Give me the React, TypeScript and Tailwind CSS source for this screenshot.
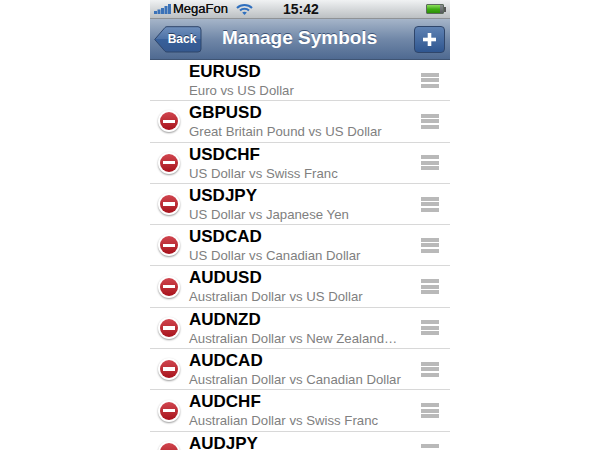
import React from 'react'

interface Symbol {
  code: string
  name?: string
  fixed?: boolean
}

const symbols: Symbol[] = [
  { code: 'EURUSD', name: 'Euro vs US Dollar', fixed: true },
  { code: 'GBPUSD', name: 'Great Britain Pound vs US Dollar' },
  { code: 'USDCHF', name: 'US Dollar vs Swiss Franc' },
  { code: 'USDJPY', name: 'US Dollar vs Japanese Yen' },
  { code: 'USDCAD', name: 'US Dollar vs Canadian Dollar' },
  { code: 'AUDUSD', name: 'Australian Dollar vs US Dollar' },
  { code: 'AUDNZD', name: 'Australian Dollar vs New Zealand…' },
  { code: 'AUDCAD', name: 'Australian Dollar vs Canadian Dollar' },
  { code: 'AUDCHF', name: 'Australian Dollar vs Swiss Franc' },
  { code: 'AUDJPY' },
]

const StatusBar = () => (
  <div className="h-[19px] shrink-0 flex items-center bg-gradient-to-b from-[#f0f2f3] to-[#bcc0c3] border-b border-[#8f9296] relative text-[#111] text-[13px] font-bold">
    <svg width="18" height="12" viewBox="0 0 18 12" className="ml-[4px] mr-[1px]">
      <rect x="0" y="8" width="3" height="3" fill="#3b72b8" />
      <rect x="3.5" y="6.5" width="3" height="4.5" fill="#3b72b8" />
      <rect x="7" y="5" width="3" height="6" fill="#3b72b8" />
      <rect x="10.5" y="3" width="3" height="8" fill="#3b72b8" />
      <rect x="14" y="1" width="3" height="10" fill="#3b72b8" />
    </svg>
    <span className="text-[13px] font-normal [text-shadow:0_0_0.5px_#111]">MegaFon</span>
    <svg width="17" height="13" viewBox="0 0 17 13" className="ml-[8px]" fill="none" stroke="#2f6fbe" strokeWidth="2">
      <path d="M1 5 C5 1 12 1 16 5" />
      <path d="M4 7.5 C6.5 5.2 10.5 5.2 13 7.5" />
      <path d="M8.5 12 L6.2 9.6 C7.5 8.6 9.5 8.6 10.8 9.6 Z" fill="#2f6fbe" stroke="none" />
    </svg>
    <span className="absolute left-[133px] w-[34px] text-center text-[14px] leading-[19px]">15:42</span>
    <div className="ml-auto mr-[4px] flex items-center">
      <div className="w-[18px] h-[10px] flex border border-[#5b6a5c] rounded-[1px] overflow-hidden">
        <div className="w-[13px] bg-gradient-to-b from-[#8de05a] via-[#3fae12] to-[#2d8f08]" />
        <div className="flex-1 bg-gradient-to-b from-[#8a8e90] to-[#55595b]" />
      </div>
      <div className="w-[2px] h-[5px] bg-[#555]" />
    </div>
  </div>
)

const NavBar = () => (
  <div className="h-[41px] shrink-0 flex items-center justify-between bg-gradient-to-b from-[#a6b5c9] via-[#7188a8] to-[#4f6a91] border-b border-[#3f5473] pl-[4px] pr-[5px] relative">
    <div className="relative h-[27px] w-[48px]">
      <svg width="48" height="27" viewBox="0 0 48 27" className="absolute inset-0">
        <defs>
          <linearGradient id="backFill" x1="0" y1="0" x2="0" y2="1">
            <stop offset="0" stopColor="#6f8fbc" />
            <stop offset="0.5" stopColor="#4c71a6" />
            <stop offset="0.5" stopColor="#38609a" />
            <stop offset="1" stopColor="#35598f" />
          </linearGradient>
        </defs>
        <path d="M0.7 13.5 L11 1.5 Q11.8 0.7 13 0.7 H44 Q47 0.7 47 4 V23 Q47 26 44 26 H13 Q11.8 26 11 25.3 Z" fill="url(#backFill)" stroke="#2f466b" />
      </svg>
      <span className="absolute left-[8px] right-0 top-0 h-full flex items-center justify-center text-white text-[12px] font-bold [text-shadow:0_-1px_0_#2a3f60]">Back</span>
    </div>
    <span className="absolute left-[72px] top-[7px] text-white text-[19px] leading-[24px] font-bold [text-shadow:0_-1px_0_#3d5478]">Manage Symbols</span>
    <div className="w-[31px] h-[27px] rounded-[4px] border border-[#2f466b] bg-gradient-to-b from-[#5f82b3] to-[#2f5690] flex items-center justify-center">
      <svg width="13" height="13" viewBox="0 0 13 13">
        <rect x="0" y="4.7" width="13" height="3.6" fill="#fff" />
        <rect x="4.7" y="0" width="3.6" height="13" fill="#fff" />
      </svg>
    </div>
  </div>
)

const DeleteBadge = () => (
  <div className="w-[22px] h-[22px] rounded-full bg-white shadow-[0_1px_2px_#0006] flex items-center justify-center">
    <div className="w-[18px] h-[18px] rounded-full bg-gradient-to-b from-[#d0444e] to-[#a80f1b] flex items-center justify-center">
      <div className="w-[12px] h-[3.5px] bg-white" />
    </div>
  </div>
)

const Row = ({ item }: { item: Symbol }) => (
  <div className="h-[41.3px] shrink-0 border-b border-[#d8d8d8] flex items-start relative">
    <div className="w-[39px] h-full flex items-center pl-[8px]">
      {!item.fixed && <DeleteBadge />}
    </div>
    <div className="flex-1 min-w-0 pt-[2px]">
      <div className="text-[17px] leading-[20px] font-bold text-black">{item.code}</div>
      {item.name && (
        <div className="text-[13.2px] leading-[16px] mt-[1px] text-[#808080] whitespace-nowrap">{item.name}</div>
      )}
    </div>
    <div className="w-[18px] mr-[11px] h-full flex flex-col justify-center gap-[1.5px]">
      <div className="h-[4px] bg-[#b9b9b9]" />
      <div className="h-[4px] bg-[#b9b9b9]" />
      <div className="h-[4px] bg-[#b9b9b9]" />
    </div>
  </div>
)

export default function App() {
  return (
    <div className="w-[600px] h-[450px] bg-white flex justify-center overflow-hidden font-['Liberation_Sans',Arial,sans-serif]">
      <div className="w-[300px] h-[450px] flex flex-col overflow-hidden">
        <StatusBar />
        <NavBar />
        {symbols.map((s) => (
          <Row key={s.code} item={s} />
        ))}
      </div>
    </div>
  )
}
